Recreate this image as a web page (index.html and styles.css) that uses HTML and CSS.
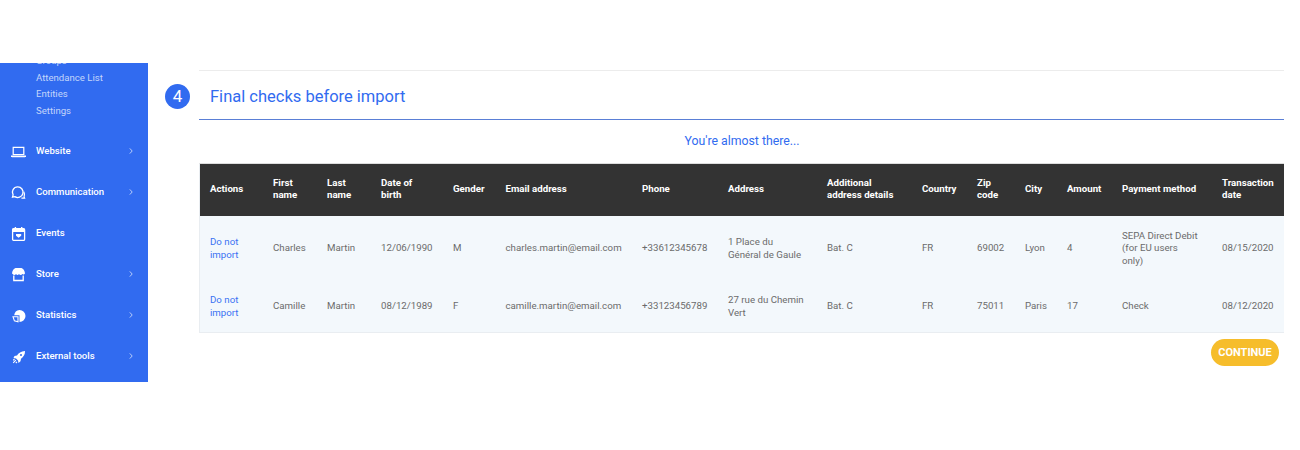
FILE: index.html
```html
<!DOCTYPE html>
<html lang="en">
<head>
<meta charset="utf-8">
<title>Final checks before import</title>
<link rel="stylesheet" href="styles.css">
</head>
<body>
<div class="layout">
  <aside class="sidebar">
    <div class="sub">
      <a>Groups</a>
      <a>Attendance List</a>
      <a>Entities</a>
      <a>Settings</a>
    </div>
    <nav class="nav">
      <div class="item">
        <svg class="ico" viewBox="0 0 16 16"><path d="M3.200 11.500V4.300h10.600v7.200z" fill="none" stroke="#fff" stroke-width="1.200"/><path d="M1 12.400h15v.8l-1 1H2l-1-1z" fill="#fff"/></svg>
        <span class="label">Website</span>
        <svg class="chev" viewBox="0 0 4 6"><path d="M.8.400L3.200 3 .8 5.600" fill="none" stroke="#dbe6fd" stroke-width=".8"/></svg>
      </div>
      <div class="item">
        <svg class="ico" viewBox="0 0 16 16"><path d="M7.700 2.900a5.300 5.300 0 1 1-2.900 9.700l-2.300.6.600-2.300a5.300 5.300 0 0 1 4.600-8z" fill="none" stroke="#fff" stroke-width="1.300"/><path d="M13.800 7.800c1 1.800 1 3.600.3 5.200l.5 1.200h-3.200" fill="none" stroke="#fff" stroke-width="1.200"/></svg>
        <span class="label">Communication</span>
        <svg class="chev" viewBox="0 0 4 6"><path d="M.8.400L3.200 3 .8 5.600" fill="none" stroke="#dbe6fd" stroke-width=".8"/></svg>
      </div>
      <div class="item">
        <svg class="ico" viewBox="0 0 16 16"><rect x="2.600" y="3.600" width="12" height="11.800" rx="1.200" fill="none" stroke="#fff" stroke-width="1.300"/><path d="M2.500 3.500h12v3.500h-12zM4.700 2h1.400v3H4.700zM11 2h1.400v3H11zM6 9h5.200v1.800l-2.600 2-2.600-2z" fill="#fff"/></svg>
        <span class="label">Events</span>
      </div>
      <div class="item">
        <svg class="ico" viewBox="0 0 16 16"><path d="M5.500 2h6c1.800.6 3 2.400 3.500 5.200a1.600 1.600 0 0 1-2.700.8 1.900 1.900 0 0 1-3.300 0 1.900 1.900 0 0 1-3 0 1.900 1.900 0 0 1-3.300 0A1.600 1.600 0 0 1 2 7.200C2.500 4.400 3.700 2.600 5.500 2z" fill="#fff"/><path d="M3.800 9.500v5h9.400v-5" fill="none" stroke="#fff" stroke-width="1.300"/></svg>
        <span class="label">Store</span>
        <svg class="chev" viewBox="0 0 4 6"><path d="M.8.400L3.200 3 .8 5.600" fill="none" stroke="#dbe6fd" stroke-width=".8"/></svg>
      </div>
      <div class="item">
        <svg class="ico" viewBox="0 0 16 16"><path d="M9.500 3a6 6 0 1 1 0 12V8.300H4.200A6 6 0 0 1 9.500 3z" fill="#fff"/><path d="M3 9.700h5v5l-3.600-.8z" fill="none" stroke="#fff" stroke-width="1.100"/></svg>
        <span class="label">Statistics</span>
        <svg class="chev" viewBox="0 0 4 6"><path d="M.8.400L3.200 3 .8 5.600" fill="none" stroke="#dbe6fd" stroke-width=".8"/></svg>
      </div>
      <div class="item">
        <svg class="ico" viewBox="0 0 16 16"><path d="M15 3c-4 .2-6.500 2-8 4.500l-2.500.5-1 2 2.500.5 2 2 .5 2.500 2-1.800.5-2.500c2.500-1.700 4-4.200 4-7.200z" fill="#fff"/><circle cx="11" cy="7" r="1" fill="#316bf0"/><path d="M3.200 14.800l2.600-2.600M3.200 12.300l1.300-1.300M5.800 15l1.200-1.200" stroke="#fff" stroke-width="1.100"/></svg>
        <span class="label">External tools</span>
        <svg class="chev" viewBox="0 0 4 6"><path d="M.8.400L3.200 3 .8 5.600" fill="none" stroke="#dbe6fd" stroke-width=".8"/></svg>
      </div>
    </nav>
  </aside>
  <main class="main">
    <span class="step">4</span>
    <section class="panel">
      <h2 class="title">Final checks before import</h2>
      <p class="lead">You're almost there...</p>
      <table class="grid">
        <colgroup>
          <col class="c1"><col class="c2"><col class="c3"><col class="c4"><col class="c5"><col class="c6"><col class="c7"><col class="c8"><col class="c9"><col class="c10"><col class="c11"><col class="c12"><col class="c13"><col class="c14"><col class="c15">
        </colgroup>
        <thead>
          <tr><th>Actions</th><th>First name</th><th>Last name</th><th>Date of birth</th><th>Gender</th><th>Email address</th><th>Phone</th><th>Address</th><th>Additional address details</th><th>Country</th><th>Zip code</th><th>City</th><th>Amount</th><th>Payment method</th><th>Transaction date</th></tr>
        </thead>
        <tbody>
          <tr class="r1"><td><a class="link">Do not import</a></td><td>Charles</td><td>Martin</td><td>12/06/1990</td><td>M</td><td>charles.martin@email.com</td><td>+33612345678</td><td>1 Place du Général de Gaule</td><td>Bat. C</td><td>FR</td><td>69002</td><td>Lyon</td><td>4</td><td class="pay">SEPA Direct Debit (for EU users only)</td><td>08/15/2020</td></tr>
          <tr class="r2"><td><a class="link">Do not import</a></td><td>Camille</td><td>Martin</td><td>08/12/1989</td><td>F</td><td>camille.martin@email.com</td><td>+33123456789</td><td>27 rue du Chemin Vert</td><td>Bat. C</td><td>FR</td><td>75011</td><td>Paris</td><td>17</td><td class="pay">Check</td><td>08/12/2020</td></tr>
        </tbody>
      </table>
      <div class="actions"><button class="cta">CONTINUE</button></div>
    </section>
  </main>
</div>
</body>
</html>
```
FILE: styles.css
```css
* { box-sizing: border-box; }
html, body { margin: 0; height: 450px; overflow: hidden; background: #fff; }
body { font-family: Roboto, "Liberation Sans", sans-serif; padding-top: 63px; }
.layout { display: flex; align-items: flex-start; }
.sidebar { width: 148px; height: 319px; background: #316bf0; overflow: hidden; flex: none; color: #fff; }
.sub { display: flex; flex-direction: column; margin-top: -10px; padding-left: 36px; font-size: 9.600px; line-height: 16.600px; color: #c3d5fb; }
.nav { margin-top: 11.100px; }
.item { display: flex; align-items: center; height: 41px; padding: 0 15.500px 0 10px; font-size: 9.600px; font-weight: 500; }
.ico { width: 16px; height: 16px; flex: none; }
.label { margin-left: 10px; flex: 1; }
.chev { width: 4px; height: 6px; flex: none; }
.main { flex: 1; display: flex; padding-top: 7px; min-width: 0; }
.step { flex: none; width: 25px; height: 25px; margin: 14px 9px 0 17px; border-radius: 50%; background: #316bf0; color: #fff; font-size: 17px; line-height: 25px; text-align: center; }
.panel { width: 1085px; border-top: 1px solid #ececec; }
.title { margin: 0; height: 49px; padding-left: 11px; border-bottom: 1px solid #5a7fd6; color: #316bf0; font-size: 16.500px; font-weight: 400; line-height: 51px; }
.lead { margin: 14px 0 14px; color: #316bf0; font-size: 12.300px; line-height: 15px; text-align: center; padding-left: 1px; }
.grid { width: 1085px; table-layout: fixed; border-collapse: separate; border-spacing: 0; border-left: 1px solid #e9edf1; border-top: 1px solid #ddd; border-bottom: 1px solid #e9edf1; font-size: 9.700px; line-height: 12.500px; }
.c1 { width: 63px; } .c2 { width: 54px; } .c3 { width: 54px; } .c4 { width: 72px; } .c5 { width: 52.500px; }
.c6 { width: 136.500px; } .c7 { width: 86px; } .c8 { width: 99px; } .c9 { width: 95px; } .c10 { width: 55px; }
.c11 { width: 48px; } .c12 { width: 42px; } .c13 { width: 55px; } .c14 { width: 100px; } .c15 { width: 72px; }
th { background: #333; color: #fff; height: 52px; padding: 0 10px 2px; text-align: left; font-weight: 700; }
td { padding: 0 10px; color: #6b6b6b; vertical-align: middle; }
td.pay { padding-right: 14px; }
tbody tr { background: #f3f8fc; }
.r1 { height: 65px; }
.r2 { height: 51px; }
.link { color: #3a72f3; }
.actions { display: flex; justify-content: flex-end; padding: 6px 5px 0 0; }
.cta { height: 27px; width: 68px; padding: 0; border: 0; border-radius: 14px; background: #f6bd2b; color: #fff; font-family: inherit; font-size: 11px; font-weight: 700; }
```
